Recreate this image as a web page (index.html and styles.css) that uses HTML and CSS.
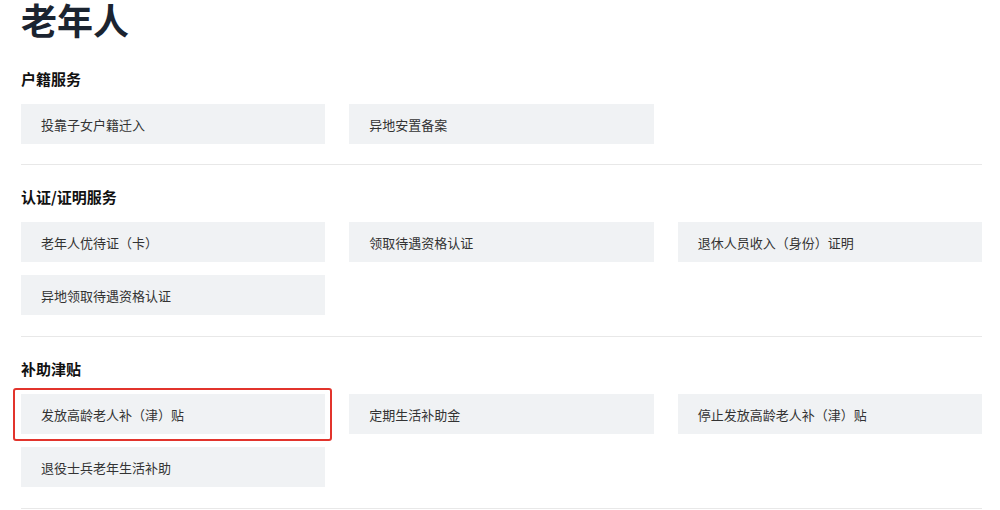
FILE: index.html
```html
<!DOCTYPE html>
<html lang="zh-CN">
<head>
<meta charset="utf-8">
<title>老年人</title>
<link rel="stylesheet" href="styles.css">
</head>
<body>
<main class="page">
  <h1 class="page-title">老年人</h1>

  <section class="group group-first">
    <h2 class="group-title">户籍服务</h2>
    <div class="items">
      <a class="item">投靠子女户籍迁入</a>
      <a class="item">异地安置备案</a>
    </div>
  </section>

  <section class="group">
    <h2 class="group-title">认证/证明服务</h2>
    <div class="items">
      <a class="item">老年人优待证（卡）</a>
      <a class="item">领取待遇资格认证</a>
      <a class="item">退休人员收入（身份）证明</a>
      <a class="item">异地领取待遇资格认证</a>
    </div>
  </section>

  <section class="group">
    <h2 class="group-title">补助津贴</h2>
    <div class="items">
      <a class="item item-highlight">发放高龄老人补（津）贴</a>
      <a class="item">定期生活补助金</a>
      <a class="item">停止发放高龄老人补（津）贴</a>
      <a class="item">退役士兵老年生活补助</a>
    </div>
  </section>
</main>
</body>
</html>
```

FILE: styles.css
```css
* {
  box-sizing: border-box;
}

html, body {
  margin: 0;
  padding: 0;
  background: #ffffff;
}

body {
  font-family: "Noto Sans CJK SC", "Noto Sans", sans-serif;
  color: #333333;
}

.page {
  padding: 0 18px 0 21px;
}

.page-title {
  margin: 0;
  font-size: 36px;
  line-height: 38px;
  font-weight: 700;
  color: #1b2430;
}

.group {
  padding: 21px 0 21px;
  border-bottom: 1px solid #e8e8e8;
}

.group-first {
  padding-top: 30px;
  padding-bottom: 20px;
}

.group-title {
  margin: 0 0 14px;
  font-size: 15px;
  line-height: 22px;
  font-weight: 700;
  color: #111111;
}

.items {
  display: grid;
  grid-template-columns: repeat(3, 1fr);
  column-gap: 24px;
  row-gap: 13px;
}

.item {
  position: relative;
  display: flex;
  align-items: center;
  height: 40px;
  padding-left: 20px;
  background: #f0f2f4;
  font-size: 13px;
  color: #333333;
  text-decoration: none;
}

.item-highlight::after {
  content: "";
  position: absolute;
  top: -6px;
  bottom: -7px;
  left: -8px;
  right: -7px;
  border: 2px solid #e2342c;
  border-radius: 3px;
}
```
